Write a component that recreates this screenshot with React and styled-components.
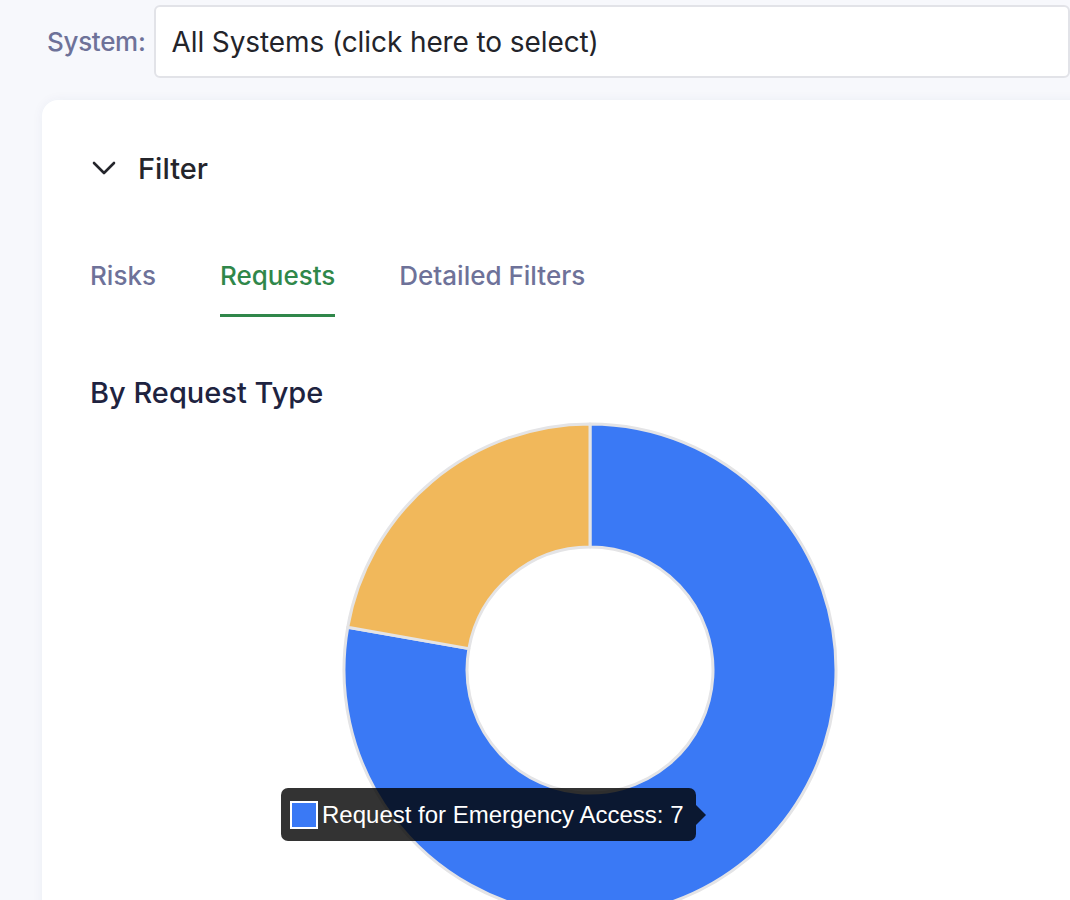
import styled, { createGlobalStyle } from 'styled-components'

const GlobalStyle = createGlobalStyle`
  html, body {
    margin: 0;
    padding: 0;
    background: #f7f8fc;
    overflow: hidden;
  }
  body {
    font-family: Inter, "Noto Sans", "Liberation Sans", sans-serif;
  }
`

const Page = styled.div`
  width: 1070px;
  height: 900px;
  padding: 5px 0 0 42px;
  box-sizing: border-box;
  overflow: hidden;
`

const SystemRow = styled.div`
  display: flex;
  align-items: center;
  gap: 8px;
  padding-left: 5px;
`

const SystemLabel = styled.label`
  font-size: 26px;
  font-weight: 500;
  color: #6e7299;
  letter-spacing: -0.3px;
`

const SystemInput = styled.div`
  width: 1000px;
  height: 73px;
  box-sizing: border-box;
  display: flex;
  align-items: center;
  padding-left: 16px;
  background: #fff;
  border: 2px solid #e2e3e8;
  border-radius: 6px;
  font-size: 28px;
  letter-spacing: -0.1px;
  color: #23242a;
`

const Card = styled.div`
  margin-top: 22px;
  width: 1100px;
  height: 900px;
  background: #fff;
  border-radius: 16px;
  box-shadow: 0 0 12px rgba(40, 50, 110, 0.05);
  padding: 0 48px;
  box-sizing: border-box;
`

const FilterHeader = styled.div`
  display: flex;
  align-items: center;
  height: 136px;
  gap: 22px;
  padding-left: 2px;
  font-size: 29px;
  font-weight: 500;
  color: #24252b;
`

const Tabs = styled.div`
  display: flex;
  gap: 64px;
  margin-top: 24px;
`

const Tab = styled.div`
  font-size: 26px;
  font-weight: 500;
  line-height: 31px;
  color: ${p => (p.$active ? '#30874a' : '#6e7299')};
  padding-bottom: 23px;
  border-bottom: 3px solid ${p => (p.$active ? '#30874a' : 'transparent')};
`

const SectionTitle = styled.h3`
  margin: 58px 0 0;
  font-size: 29px;
  line-height: 35px;
  font-weight: 500;
  color: #1e2340;
`

const ChartArea = styled.div`
  position: relative;
  height: 500px;
`

const Donut = styled.svg`
  display: block;
  margin: 10px 0 0 250px;
`

const Tooltip = styled.div`
  position: absolute;
  left: 191px;
  top: 368px;
  height: 53px;
  display: flex;
  align-items: center;
  gap: 4px;
  padding: 0 12px 0 9px;
  background: rgba(0, 0, 0, 0.8);
  border-radius: 7px;
  color: #fff;
  font-family: "Liberation Sans", Arial, sans-serif;
  font-size: 24px;

  &::after {
    content: '';
    position: absolute;
    right: -10px;
    top: 50%;
    margin-top: -10px;
    border-style: solid;
    border-width: 10px 0 10px 10px;
    border-color: transparent transparent transparent rgba(0, 0, 0, 0.8);
  }
`

const Swatch = styled.span`
  width: 24px;
  height: 24px;
  background: ${p => p.$color};
  border: 2px solid #fff;
`

const data = [
  { label: 'Request for Emergency Access', value: 7, color: '#3a79f5' },
  { label: 'Other', value: 2, color: '#f1b85b' },
]

function arcPath(cx, cy, R, r, a0, a1) {
  const pt = (rad, a) => [cx + rad * Math.cos(a), cy + rad * Math.sin(a)]
  const large = a1 - a0 > Math.PI ? 1 : 0
  const [x0, y0] = pt(R, a0)
  const [x1, y1] = pt(R, a1)
  const [x2, y2] = pt(r, a1)
  const [x3, y3] = pt(r, a0)
  return `M${x0} ${y0} A${R} ${R} 0 ${large} 1 ${x1} ${y1} L${x2} ${y2} A${r} ${r} 0 ${large} 0 ${x3} ${y3} Z`
}

function DonutChart() {
  const total = data.reduce((s, d) => s + d.value, 0)
  let start = -Math.PI / 2
  return (
    <Donut width="500" height="500" viewBox="0 0 500 500">
      {data.map(d => {
        const end = start + (d.value / total) * Math.PI * 2
        const path = arcPath(250, 250, 246, 123, start, end)
        start = end
        return <path key={d.label} d={path} fill={d.color} stroke="#e4e4e6" strokeWidth="3" strokeLinejoin="round" />
      })}
    </Donut>
  )
}

function App() {
  return (
    <Page>
      <GlobalStyle />
      <SystemRow>
        <SystemLabel>System:</SystemLabel>
        <SystemInput>All Systems (click here to select)</SystemInput>
      </SystemRow>
      <Card>
        <FilterHeader>
          <svg width="24" height="14" viewBox="0 0 24 14" fill="none">
            <path d="M2 2l10 10L22 2" stroke="#24252b" strokeWidth="2.6" strokeLinecap="round" strokeLinejoin="round" />
          </svg>
          Filter
        </FilterHeader>
        <Tabs>
          <Tab>Risks</Tab>
          <Tab $active>Requests</Tab>
          <Tab>Detailed Filters</Tab>
        </Tabs>
        <SectionTitle>By Request Type</SectionTitle>
        <ChartArea>
          <DonutChart />
          <Tooltip>
            <Swatch $color="#3a79f5" />
            Request for Emergency Access: 7
          </Tooltip>
        </ChartArea>
      </Card>
    </Page>
  )
}

export default App
